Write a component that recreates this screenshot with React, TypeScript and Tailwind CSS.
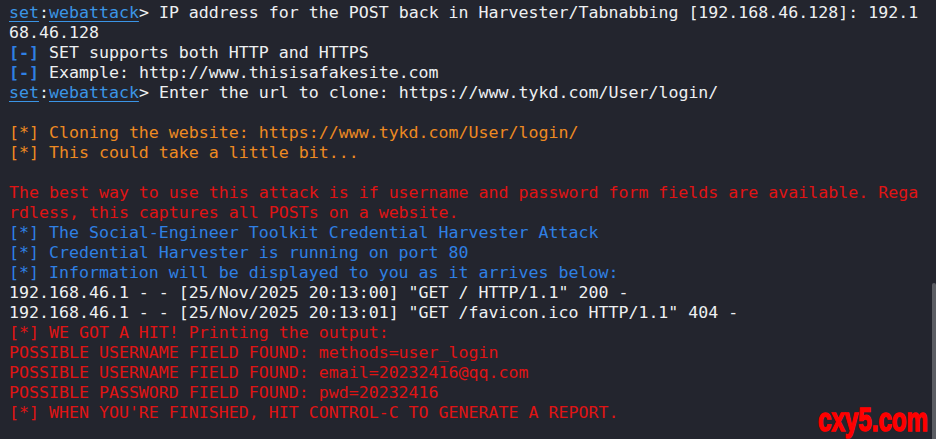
type Tone = 'white' | 'blue' | 'orange' | 'red'

const toneClass: Record<Tone, string> = {
  white: 'text-[#eef0f2]',
  blue: 'text-[#2f80e4]',
  orange: 'text-[#ee8a22]',
  red: 'text-[#e01414]',
}

function Prompt({ children }: { children: React.ReactNode }) {
  return (
    <div className="h-5 text-[#eef0f2]">
      <span className="text-[#3b95e6] underline underline-offset-[3px]">set</span>
      <span>:</span>
      <span className="text-[#3b95e6] underline underline-offset-[3px]">webattack</span>
      <span>&gt; </span>
      {children}
    </div>
  )
}

function Line({ tone = 'white', text }: { tone?: Tone; text: string }) {
  return <div className={`h-5 ${toneClass[tone]}`}>{text}</div>
}

export default function App() {
  return (
    <div className="relative w-[936px] h-[439px] overflow-hidden bg-[#23252e]">
      <div
        className="pt-[3px] pl-[9px] whitespace-pre text-[16.6px] leading-5"
        style={{ fontFamily: '"DejaVu Sans Mono", "Liberation Mono", monospace' }}
      >
        <Prompt>IP address for the POST back in Harvester/Tabnabbing [192.168.46.128]: 192.1</Prompt>
        <Line text="68.46.128" />
        <div className="h-5 text-[#eef0f2]">
          <span className="text-[#2f80e4] font-bold">[-]</span> SET supports both HTTP and HTTPS
        </div>
        <div className="h-5 text-[#eef0f2]">
          <span className="text-[#2f80e4] font-bold">[-]</span> Example: http://www.thisisafakesite.com
        </div>
        <Prompt>Enter the url to clone: https://www.tykd.com/User/login/</Prompt>
        <Line text="" />
        <Line tone="orange" text="[*] Cloning the website: https://www.tykd.com/User/login/" />
        <Line tone="orange" text="[*] This could take a little bit..." />
        <Line text="" />
        <Line tone="red" text="The best way to use this attack is if username and password form fields are available. Rega" />
        <Line tone="red" text="rdless, this captures all POSTs on a website." />
        <Line tone="blue" text="[*] The Social-Engineer Toolkit Credential Harvester Attack" />
        <Line tone="blue" text="[*] Credential Harvester is running on port 80" />
        <Line tone="blue" text="[*] Information will be displayed to you as it arrives below:" />
        <Line text={'192.168.46.1 - - [25/Nov/2025 20:13:00] "GET / HTTP/1.1" 200 -'} />
        <Line text={'192.168.46.1 - - [25/Nov/2025 20:13:01] "GET /favicon.ico HTTP/1.1" 404 -'} />
        <Line tone="red" text="[*] WE GOT A HIT! Printing the output:" />
        <Line tone="red" text="POSSIBLE USERNAME FIELD FOUND: methods=user_login" />
        <Line tone="red" text="POSSIBLE USERNAME FIELD FOUND: email=20232416@qq.com" />
        <Line tone="red" text="POSSIBLE PASSWORD FIELD FOUND: pwd=20232416" />
        <Line tone="red" text="[*] WHEN YOU'RE FINISHED, HIT CONTROL-C TO GENERATE A REPORT." />
      </div>

      <div
        className="absolute left-[818px] top-[399px] text-[34px] leading-10 font-bold text-[#ff0000] whitespace-nowrap origin-left [transform:scaleX(0.71)] [-webkit-text-stroke:1.5px_#ff0000]"
        style={{ fontFamily: '"Liberation Sans", Arial, sans-serif' }}
      >
        cxy5.com
      </div>

      <div className="absolute right-0 top-[283px] w-[4px] h-[156px] rounded-t-[2px] bg-[#5b5d63]" />
    </div>
  )
}
